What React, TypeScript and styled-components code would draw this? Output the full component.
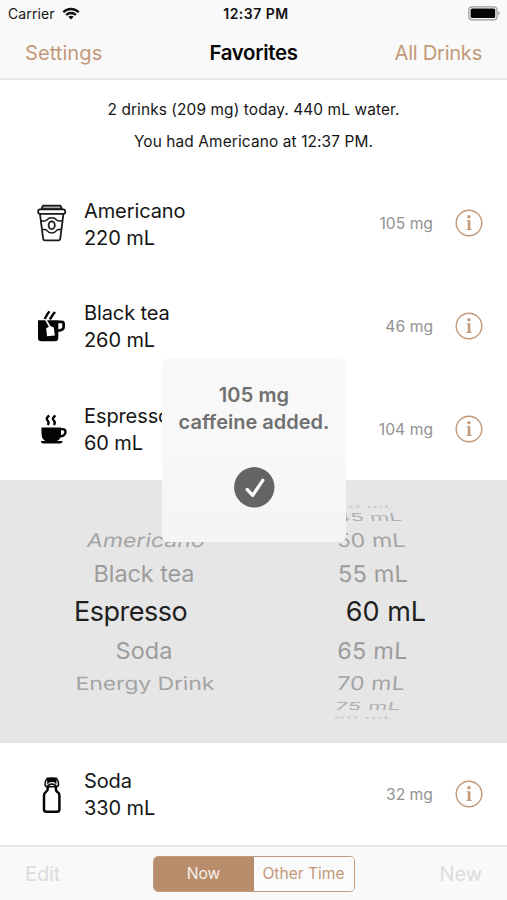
import React from "react";
import styled, { createGlobalStyle } from "styled-components";

const GlobalStyle = createGlobalStyle`
  * { box-sizing: border-box; }
  html, body { margin: 0; background: #fff; }
  body { font-family: Inter, "Liberation Sans", sans-serif; color: #161616; overflow: hidden; }
`;

const tan = "#c2997a";

const Screen = styled.div`
  position: relative;
  width: 507px;
  height: 900px;
  display: flex;
  flex-direction: column;
  background: #fff;
  overflow: hidden;
`;

const Header = styled.header`
  flex: 0 0 80px;
  display: flex;
  flex-direction: column;
  background: #f9f9f9;
  border-bottom: 2px solid #e9e9e9;
`;

const StatusBar = styled.div`
  height: 27px;
  padding: 0 7px 0 8px;
  display: grid;
  grid-template-columns: 1fr auto 1fr;
  align-items: center;
  font-size: 14px;
  line-height: 27px;
`;

const Carrier = styled.div`
  display: flex;
  align-items: center;
  gap: 7px;
  letter-spacing: 0.1px;
`;

const Clock = styled.div`
  padding-left: 4px;
  font-weight: 600;
  letter-spacing: 0.5px;
  color: #111;
`;

const BatterySlot = styled.div`
  display: flex;
  justify-content: flex-end;
`;

const NavBar = styled.nav`
  height: 51px;
  padding: 0 25px;
  display: grid;
  grid-template-columns: 1fr auto 1fr;
  align-items: center;
`;

const NavLink = styled.span<{ $end?: boolean }>`
  font-size: 20.2px;
  color: ${tan};
  letter-spacing: ${(p) => (p.$end ? -0.3 : 0)}px;
  text-align: ${(p) => (p.$end ? "right" : "left")};
`;

const NavTitle = styled.h1`
  margin: 0;
  font-size: 20.4px;
  font-weight: 600;
  letter-spacing: -0.3px;
  color: #050505;
`;

const Summary = styled.section`
  flex: 0 0 92px;
  padding-top: 14px;
  text-align: center;
  font-size: 15.4px;
  line-height: 32px;
`;

const SummaryLine = styled.div<{ $track: number }>`
  letter-spacing: ${(p) => p.$track}px;
`;

const DrinkRow = styled.article<{ $height?: number }>`
  flex: 0 0 ${(p) => p.$height ?? 102.7}px;
  padding: 0 24px 0 30px;
  display: flex;
  align-items: center;
`;

const IconBox = styled.div`
  width: 44px;
  height: 44px;
  margin-right: 10px;
  svg { display: block; }
`;

const DrinkText = styled.div`
  flex: 1;
  padding-top: 2.4px;
  font-size: 20px;
  line-height: 27px;
  letter-spacing: -0.1px;
`;

const Amount = styled.div`
  margin-right: 22px;
  padding-top: 1px;
  font-size: 15.7px;
  color: #929292;
`;

const InfoButton = styled.button`
  width: 28px;
  height: 28px;
  padding: 0;
  border: 0;
  background: none;
  svg { display: block; }
`;

const Picker = styled.section`
  flex: 0 0 263px;
  display: flex;
  background: #e6e6e6;
`;

const Wheel = styled.div<{ $width: number; $left: number }>`
  width: ${(p) => p.$width}px;
  margin-left: ${(p) => p.$left}px;
  padding-top: 1px;
  display: flex;
  flex-direction: column;
  justify-content: center;
`;

type WheelShape = { h: number; size: number; sy: number; skew: number; color: string; shift: number; track: number };

const WheelItem = styled.div<{ $s: WheelShape }>`
  height: ${(p) => p.$s.h}px;
  line-height: ${(p) => p.$s.h}px;
  font-size: ${(p) => p.$s.size}px;
  letter-spacing: ${(p) => p.$s.track}px;
  color: ${(p) => p.$s.color};
  text-align: center;
  white-space: nowrap;
  transform: translateX(${(p) => p.$s.shift}px) skewX(${(p) => p.$s.skew}deg) scaleY(${(p) => p.$s.sy});
`;

const Toolbar = styled.footer`
  flex: 1;
  padding: 1px 25px 0;
  display: flex;
  align-items: center;
  justify-content: space-between;
  background: #f9f9f9;
  border-top: 2px solid #e9e9e9;
`;

const ToolButton = styled.span`
  width: 60px;
  font-size: 20px;
  color: #dcdcdc;
  letter-spacing: -0.1px;
  &:last-child { text-align: right; }
`;

const Segments = styled.div`
  width: 202px;
  height: 36px;
  display: flex;
  border: 1.5px solid ${tan};
  border-radius: 5px;
  overflow: hidden;
`;

const Segment = styled.div<{ $active?: boolean }>`
  flex: 1;
  text-align: center;
  font-size: 15.6px;
  line-height: 34px;
  color: ${(p) => (p.$active ? "#f7f1ec" : tan)};
  background: ${(p) => (p.$active ? "#b88d6c" : "#fbfbfb")};
`;

const Toast = styled.div`
  position: absolute;
  left: 162px;
  top: 359px;
  width: 184px;
  height: 183px;
  padding-top: 23px;
  display: flex;
  flex-direction: column;
  align-items: center;
  border-radius: 6px;
  background: linear-gradient(#f8f8f8 0%, #f8f8f8 50%, #f4f4f4 100%);
  text-align: center;
  font-size: 20px;
  font-weight: 600;
  line-height: 27px;
  color: #707070;
  svg { margin-top: 31px; }
`;

const ToastLine = styled.div<{ $track: number }>`
  letter-spacing: ${(p) => p.$track}px;
`;

const Wifi = () => (
  <svg width="18" height="13" viewBox="0 0 18 13" fill="none" stroke="#111" strokeWidth="2.3">
    <path d="M1.3 5.2C5.5 .9 12.5 .9 16.7 5.2" />
    <path d="M4.1 8C6.8 5.3 11.2 5.3 13.9 8" />
    <path d="M6.3 9.7C7.8 8.4 10.2 8.4 11.7 9.7L9 12.4Z" fill="#111" stroke="none" />
  </svg>
);

const Battery = () => (
  <svg width="32" height="15" viewBox="0 0 32 15">
    <rect x="0.8" y="0.8" width="28.2" height="13" rx="3.4" fill="#fbfbfb" stroke="#999" strokeWidth="1.2" />
    <rect x="2.6" y="2.6" width="24.6" height="9.4" rx="1.6" fill="#050505" />
    <path d="M30.2 5.2Q31.6 5.7 31.6 7.2T30.2 9.3Z" fill="#999" />
  </svg>
);

const Info = () => (
  <svg width="28" height="28" viewBox="0 0 28 28">
    <circle cx="14" cy="14" r="12.8" fill="none" stroke={tan} strokeWidth="1.4" />
    <circle cx="13.9" cy="7.7" r="1.7" fill={tan} />
    <path d="M11.6 11.3H15.4V19.8L16.6 20.1V21H11.6V20.1L12.8 19.8V12.5L11.6 12.2Z" fill={tan} />
  </svg>
);

const PaperCup = () => (
  <svg width="44" height="44" viewBox="0 0 44 44" fill="none" stroke="#1a1a1a" strokeWidth="1.8" strokeLinejoin="round" strokeLinecap="round">
    <path d="M11.4 8.2L13 4.6H30.4L32 8.2Z" fill="#aaa" />
    <rect x="8.2" y="8.3" width="27" height="4.6" rx="1.8" fill="#fff" />
    <path d="M10 13.2L13.2 37.8Q13.4 39.4 15 39.4H28.4Q30 39.4 30.2 37.8L33.4 13.2" />
    <path d="M11.2 20H14.3Q15.9 20 17 18.8C19.2 16.2 24.2 16.2 26.4 18.8Q27.5 20 29.1 20H32.3" strokeWidth="1.5" />
    <path d="M12 28.4H14.3Q15.9 28.4 17 29.6C19.2 32.8 24.2 32.8 26.4 29.6Q27.5 28.4 29.1 28.4H31.4" strokeWidth="1.5" />
    <ellipse cx="21.7" cy="24.3" rx="3.1" ry="3.9" />
  </svg>
);

const TeaMug = () => (
  <svg width="44" height="44" viewBox="0 0 44 44">
    <path d="M8 16.3H28.3V34Q28.3 37.3 25 37.3H11.3Q8 37.3 8 34Z" fill="#050505" />
    <path d="M28 17.8H31.6Q33.6 17.8 33.6 19.8V23Q33.6 26.4 28 26.6" fill="none" stroke="#050505" strokeWidth="2.7" />
    <path d="M19.4 7.4L17.2 10.4L16.4 12L14.6 15M25 8L22.6 11L21.6 12.8L19.8 15.4" fill="none" stroke="#050505" strokeWidth="2.4" />
    <path d="M15.8 15.6L20 23" stroke="#fff" strokeWidth="1.6" />
    <path d="M16.2 24.3L20.2 21.9L23.8 23.6L24.8 31.4L17 32.3Z" fill="#fff" />
  </svg>
);

const EspressoCup = () => (
  <svg width="44" height="44" viewBox="0 0 44 44">
    <path d="M11.5 20.5H31V26.5Q31 34.4 24.5 34.4H18Q11.5 34.4 11.5 26.5Z" fill="#050505" />
    <path d="M30.4 22.1H32.6Q35.5 22.1 35.5 25Q35.5 29.2 29.5 29.4" fill="none" stroke="#050505" strokeWidth="2.4" />
    <path d="M11 34H32.5V34.9Q31.4 36.5 29.6 36.5H13.7Q11.8 36.5 11 34.9Z" fill="#050505" />
    <path d="M19.1 8.4C15.8 11.8 16.4 12.3 17.7 13.6Q19.4 15.2 17.8 18M25.3 8.4C22 11.8 22.6 12.3 23.9 13.6Q25.6 15.2 24 18" fill="none" stroke="#050505" strokeWidth="2.4" />
  </svg>
);

const Bottle = () => (
  <svg width="44" height="44" viewBox="0 0 44 44" fill="none" stroke="#050505">
    <path d="M17.7 15V17.2Q17.6 19 15.6 20.2Q14 21.2 14 23.4V37.5Q14 39.8 16.5 39.8H26.8Q29.4 39.8 29.4 37.5V23.4Q29.4 21.2 27.8 20.2Q25.9 19 25.9 17.2V15" strokeWidth="2.5" />
    <path d="M17.3 6.2Q14.7 9.2 15 12.5Q15.2 14.7 17.4 14.7H26.2Q28.4 14.7 28.6 12.5Q28.8 9.2 26.4 6.2Z" strokeWidth="1.5" fill="#ddd" />
    <path d="M17 6.3Q21.8 4.8 26.6 6.3L26.2 12.3L24 9.9H20L17.4 12.3Z" fill="#050505" stroke="none" />
    <path d="M17.5 13.9Q21.8 10 26.3 13.9" strokeWidth="1.5" />
  </svg>
);

const Check = () => (
  <svg width="41" height="41" viewBox="0 0 41 41">
    <circle cx="20.3" cy="20.3" r="20.2" fill="#626466" />
    <path d="M13.2 22.5L18.7 28.3L28.8 13.3" fill="none" stroke="#fff" strokeWidth="3.3" strokeLinecap="round" strokeLinejoin="round" />
  </svg>
);

const Drink = ({ icon, name, volume, amount, height }: { icon: React.ReactNode; name: string; volume: string; amount: string; height?: number }) => (
  <DrinkRow $height={height}>
    <IconBox>{icon}</IconBox>
    <DrinkText>
      <div>{name}</div>
      <div>{volume}</div>
    </DrinkText>
    <Amount>{amount}</Amount>
    <InfoButton aria-label="Details"><Info /></InfoButton>
  </DrinkRow>
);

const near = "#9c9c9c";
const far = "#a4a4a4";
const edge = "#b0b0b0";
const rim = "#c6c6c6";

const drinkWheel: [string, WheelShape][] = [
  ["Americano", { h: 29, size: 23, sy: 0.82, skew: -10, color: far, shift: 2, track: 0 }],
  ["Black tea", { h: 37, size: 23.5, sy: 0.98, skew: 0, color: near, shift: 0, track: -0.1 }],
  ["Espresso", { h: 40, size: 27, sy: 1.02, skew: 0, color: "#1f1f1f", shift: -13.5, track: -0.5 }],
  ["Soda", { h: 37, size: 23.5, sy: 0.98, skew: 0, color: near, shift: 0, track: 0 }],
  ["Energy Drink", { h: 29, size: 23, sy: 0.8, skew: 2, color: far, shift: 1, track: -0.1 }],
];

const volumeWheel: [string, WheelShape][] = [
  ["40 mL", { h: 5, size: 20, sy: 0.16, skew: 0, color: rim, shift: -8, track: 0 }],
  ["45 mL", { h: 17, size: 22, sy: 0.5, skew: 12, color: edge, shift: -4, track: 0 }],
  ["50 mL", { h: 29, size: 23, sy: 0.82, skew: 5, color: far, shift: -2, track: 0.1 }],
  ["55 mL", { h: 37, size: 23.5, sy: 0.98, skew: 2, color: near, shift: 0, track: 0.2 }],
  ["60 mL", { h: 40, size: 27, sy: 1.02, skew: 0, color: "#1f1f1f", shift: 13, track: 0 }],
  ["65 mL", { h: 37, size: 23.5, sy: 0.98, skew: -2, color: near, shift: -0.5, track: 0.2 }],
  ["70 mL", { h: 29, size: 23, sy: 0.82, skew: -5, color: far, shift: -2, track: 0.2 }],
  ["75 mL", { h: 17, size: 22, sy: 0.5, skew: -12, color: edge, shift: -5, track: 0.4 }],
  ["80 mL", { h: 5, size: 20, sy: 0.16, skew: 0, color: rim, shift: -9, track: 0.4 }],
];

export default function App() {
  return (
    <>
      <GlobalStyle />
      <Screen>
        <Header>
          <StatusBar>
            <Carrier>Carrier <Wifi /></Carrier>
            <Clock>12:37 PM</Clock>
            <BatterySlot><Battery /></BatterySlot>
          </StatusBar>
          <NavBar>
            <NavLink>Settings</NavLink>
            <NavTitle>Favorites</NavTitle>
            <NavLink $end>All Drinks</NavLink>
          </NavBar>
        </Header>
        <Summary>
          <SummaryLine $track={0.11}>2 drinks (209 mg) today. 440 mL water.</SummaryLine>
          <SummaryLine $track={0.13}>You had Americano at 12:37 PM.</SummaryLine>
        </Summary>
        <Drink icon={<PaperCup />} name="Americano" volume="220 mL" amount="105 mg" />
        <Drink icon={<TeaMug />} name="Black tea" volume="260 mL" amount="46 mg" />
        <Drink icon={<EspressoCup />} name="Espresso" volume="60 mL" amount="104 mg" />
        <Picker>
          <Wheel $width={200} $left={44}>
            {drinkWheel.map(([label, s]) => <WheelItem key={label} $s={s}>{label}</WheelItem>)}
          </Wheel>
          <Wheel $width={200} $left={29}>
            {volumeWheel.map(([label, s]) => <WheelItem key={label} $s={s}>{label}</WheelItem>)}
          </Wheel>
        </Picker>
        <Drink icon={<Bottle />} name="Soda" volume="330 mL" amount="32 mg" height={102.4} />
        <Toolbar>
          <ToolButton>Edit</ToolButton>
          <Segments>
            <Segment $active>Now</Segment>
            <Segment>Other Time</Segment>
          </Segments>
          <ToolButton>New</ToolButton>
        </Toolbar>
        <Toast>
          <ToastLine $track={0.1}>105 mg</ToastLine>
          <ToastLine $track={0}>caffeine added.</ToastLine>
          <Check />
        </Toast>
      </Screen>
    </>
  );
}
